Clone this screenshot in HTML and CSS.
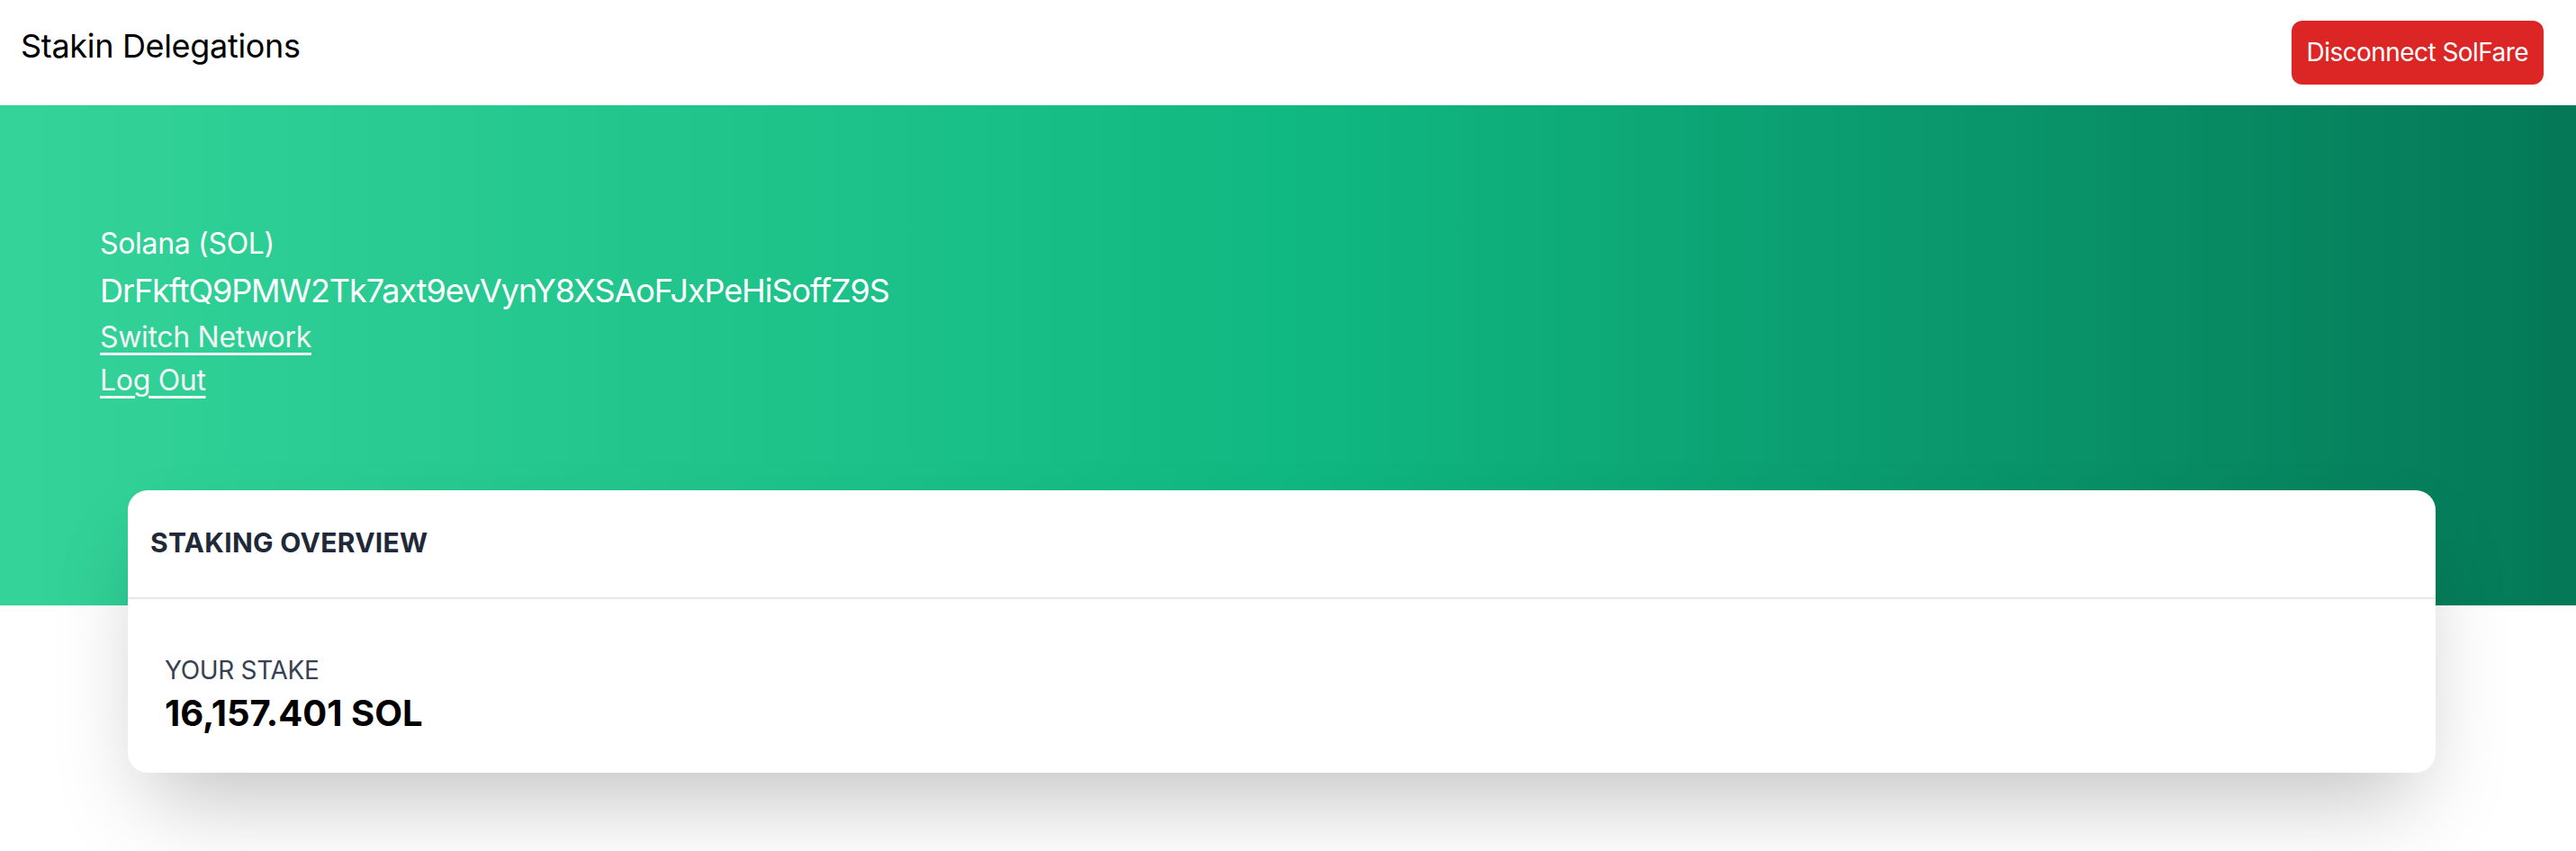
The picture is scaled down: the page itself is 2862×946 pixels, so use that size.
FILE: index.html
```html
<!DOCTYPE html>
<html lang="en">
<head>
<meta charset="utf-8">
<title>Stakin Delegations</title>
<link rel="stylesheet" href="styles.css">
</head>
<body>
<header class="topbar">
  <div class="brand">Stakin Delegations</div>
  <button class="btn-disconnect">Disconnect SolFare</button>
</header>
<section class="hero">
  <div class="hero-network">Solana (SOL)</div>
  <div class="hero-address">DrFkftQ9PMW2Tk7axt9evVynY8XSAoFJxPeHiSoffZ9S</div>
  <a class="hero-link" href="#">Switch Network</a>
  <a class="hero-link" href="#">Log Out</a>
</section>
<main class="content">
  <div class="card">
    <div class="card-header">STAKING OVERVIEW</div>
    <div class="card-body">
      <div class="stat-label">YOUR STAKE</div>
      <div class="stat-value">16,157.401 SOL</div>
    </div>
  </div>
</main>
</body>
</html>
```

FILE: styles.css
```css
* { box-sizing: border-box; }
html, body {
  margin: 0;
  padding: 0;
  background: #ffffff;
  font-family: Inter, "Liberation Sans", sans-serif;
  letter-spacing: -0.02em;
  color: #000;
}
.topbar {
  display: flex;
  justify-content: space-between;
  align-items: flex-start;
  padding: 23px 36px 23px 23px;
  height: 117px;
}
.brand {
  font-size: 36px;
  line-height: 56px;
  color: #000;
}
.btn-disconnect {
  font-family: inherit;
  letter-spacing: -0.02em;
  font-size: 28px;
  line-height: 39px;
  padding: 16px 17px;
  border: 0;
  border-radius: 12px;
  background: #dc2626;
  color: #fff;
}
.hero {
  display: flex;
  flex-direction: column;
  align-items: flex-start;
  padding: 130px 111px 226px;
  background: linear-gradient(to right, #34d399 0%, #10b981 50%, #047857 100%);
  color: #fff;
}
.hero-network {
  font-size: 32px;
  line-height: 48px;
}
.hero-address {
  font-size: 36px;
  line-height: 56px;
  letter-spacing: -0.03em;
}
.hero-link {
  font-size: 32px;
  line-height: 48px;
  color: #f3f4f6;
  text-decoration: underline;
  text-underline-offset: 6px;
}
.content {
  padding: 0 156px 90px 142px;
  margin-top: -128px;
}
.card {
  background: #fff;
  border-radius: 22px;
  box-shadow: 0 50px 100px -24px rgba(0,0,0,0.25);
}
.card-header {
  height: 121px;
  padding: 36px 25px 0;
  font-size: 30px;
  line-height: 44px;
  font-weight: 700;
  letter-spacing: 0.01em;
  color: #1f2937;
  border-bottom: 2px solid #e5e7eb;
}
.card-body {
  padding: 59px 41px 0;
  height: 193px;
}
.stat-label {
  font-size: 28px;
  line-height: 40px;
  color: #374151;
}
.stat-value {
  font-size: 40px;
  line-height: 56px;
  font-weight: 700;
  letter-spacing: 0;
  color: #000;
}
```
